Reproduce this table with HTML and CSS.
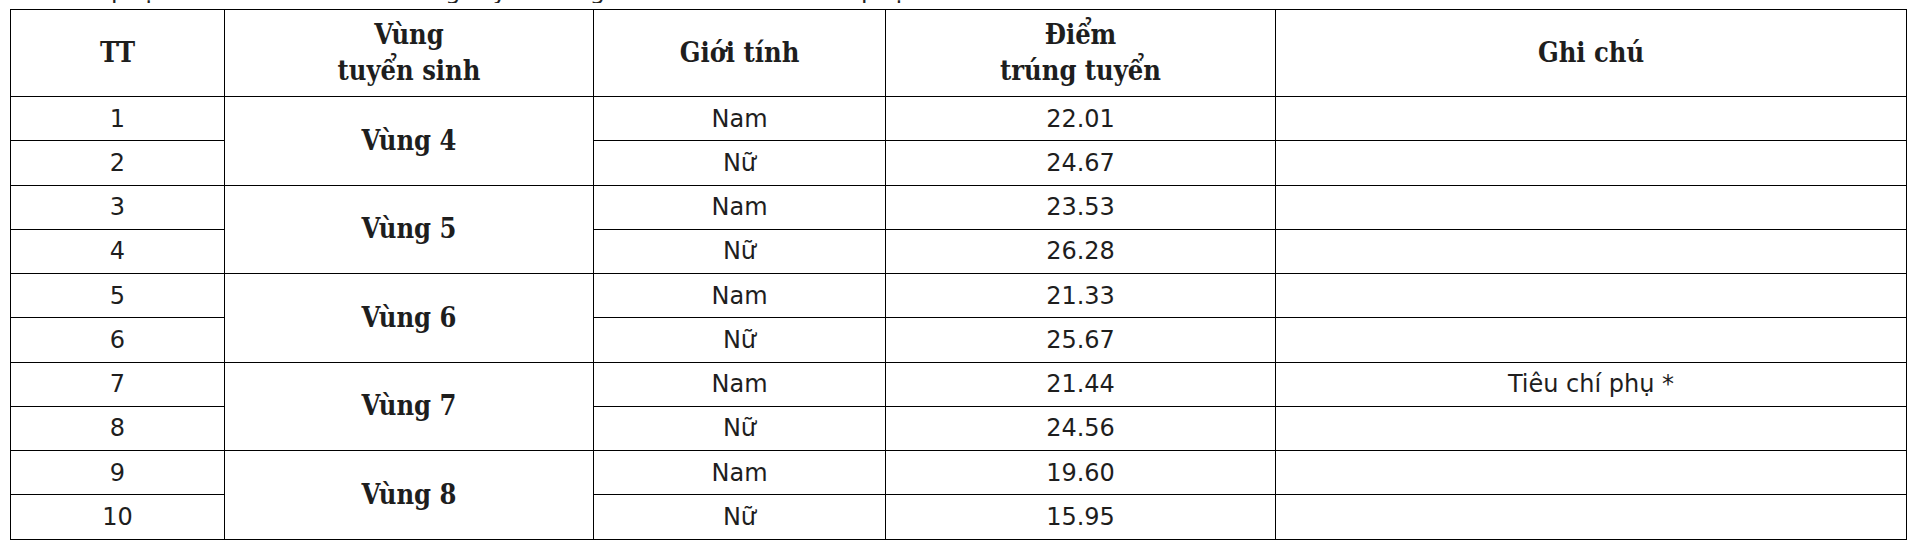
FILE: index.html
```html
<!DOCTYPE html>
<html lang="vi">
<head>
<meta charset="utf-8">
<title>Điểm trúng tuyển</title>
<link rel="stylesheet" href="styles.css">
</head>
<body>
<div class="page">
  <p class="cut">Tiêu chí phụ: thí sinh mức điểm trúng tuyển bằng nhau thì xét tiêu chí phụ</p>
  <table class="scores">
    <colgroup>
      <col class="c-tt"><col class="c-vung"><col class="c-gt"><col class="c-diem"><col class="c-note">
    </colgroup>
    <thead>
      <tr class="head">
        <th>TT</th>
        <th>Vùng<br>tuyển sinh</th>
        <th>Giới tính</th>
        <th>Điểm<br>trúng tuyển</th>
        <th>Ghi chú</th>
      </tr>
    </thead>
    <tbody>
      <tr><td>1</td><td class="zone" rowspan="2">Vùng 4</td><td>Nam</td><td>22.01</td><td></td></tr>
      <tr><td>2</td><td>Nữ</td><td>24.67</td><td></td></tr>
      <tr><td>3</td><td class="zone" rowspan="2">Vùng 5</td><td>Nam</td><td>23.53</td><td></td></tr>
      <tr><td>4</td><td>Nữ</td><td>26.28</td><td></td></tr>
      <tr><td>5</td><td class="zone" rowspan="2">Vùng 6</td><td>Nam</td><td>21.33</td><td></td></tr>
      <tr><td>6</td><td>Nữ</td><td>25.67</td><td></td></tr>
      <tr><td>7</td><td class="zone" rowspan="2">Vùng 7</td><td>Nam</td><td>21.44</td><td>Tiêu chí phụ *</td></tr>
      <tr><td>8</td><td>Nữ</td><td>24.56</td><td></td></tr>
      <tr><td>9</td><td class="zone" rowspan="2">Vùng 8</td><td>Nam</td><td>19.60</td><td></td></tr>
      <tr><td>10</td><td>Nữ</td><td>15.95</td><td></td></tr>
    </tbody>
  </table>
</div>
</body>
</html>
```

FILE: styles.css
```css
html, body {
  margin: 0;
  padding: 0;
  background: #fff;
}
.page {
  padding: 0 6px 0 10px;
  overflow: hidden;
}
.cut {
  margin: -21px 0 6px 0;
  height: 24px;
  font-family: "DejaVu Sans", sans-serif;
  font-size: 24px;
  line-height: 24px;
  color: #222;
  white-space: nowrap;
  overflow: hidden;
}
.scores {
  border-collapse: collapse;
  width: 1896px;
  table-layout: fixed;
  color: #1e1e1e;
}
.c-tt { width: 214px; }
.c-vung { width: 369px; }
.c-gt { width: 292px; }
.c-diem { width: 390px; }
.c-note { width: 631px; }
.scores th, .scores td {
  border: 1px solid #000;
  text-align: center;
  vertical-align: middle;
  padding: 0;
}
.scores th {
  font-family: "DejaVu Serif Condensed", "DejaVu Serif", serif;
  font-weight: bold;
  font-size: 27px;
  line-height: 36px;
  height: 86px;
}
.scores td {
  font-family: "DejaVu Sans", sans-serif;
  font-size: 24px;
  line-height: 28px;
  height: 43.25px;
}
.scores td.zone {
  font-family: "DejaVu Serif Condensed", "DejaVu Serif", serif;
  font-weight: bold;
  font-size: 27px;
}
```
